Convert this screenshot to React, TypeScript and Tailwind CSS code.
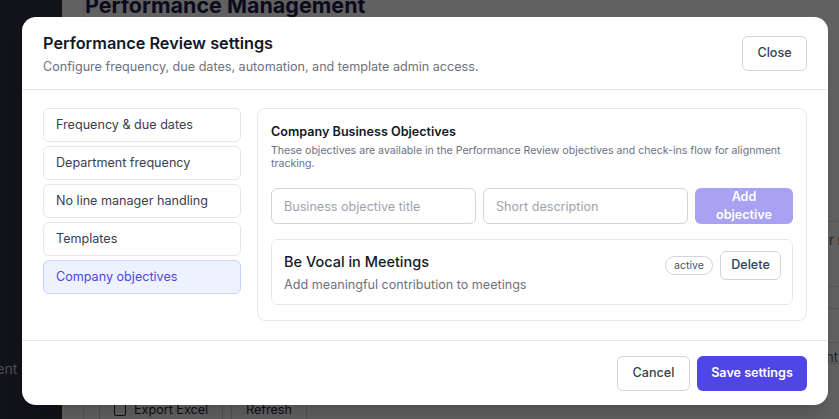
import React, { useState } from 'react';

const sections = [
  'Frequency & due dates',
  'Department frequency',
  'No line manager handling',
  'Templates',
  'Company objectives',
];

const App: React.FC = () => {
  const [active, setActive] = useState('Company objectives');
  const [title, setTitle] = useState('');
  const [desc, setDesc] = useState('');

  return (
    <div
      className="relative w-[839px] h-[419px] overflow-hidden flex bg-white"
      style={{ fontFamily: 'Inter, "Noto Sans", sans-serif' }}
    >
      {/* page behind the dialog */}
      <aside className="w-[62px] shrink-0 bg-[#2d3240] flex flex-col justify-end pb-[40px]">
        <span className="text-[14px] text-[#c9ccd3] -ml-[16px]">ment</span>
      </aside>
      <main className="flex-1 flex">
        <div className="w-[22px] border-r border-[#dfe1e6]" />
        <div className="flex-1 flex flex-col">
          <h1 className="-mt-[11px] ml-[1px] text-[21.5px] font-bold text-[#1e1b4b]">Performance Management</h1>
          <div className="flex-1" />
          <div className="flex gap-2 ml-[15px] -mb-[8px]">
            <button className="h-[34px] px-[14px] rounded-md border border-[#cfd3da] text-[12.6px] text-[#1f2937] flex items-center gap-2">
              <span className="w-[12px] h-[12px] border border-[#1f2937] rounded-[2px]" />
              Export Excel
            </button>
            <button className="h-[34px] px-[14px] rounded-md border border-[#cfd3da] text-[12.6px] text-[#1f2937]">Refresh</button>
          </div>
        </div>
      </main>

      {/* backdrop */}
      <div className="absolute inset-0 bg-black/[0.62]" />
      <div className="absolute left-[828px] top-[221px] w-[20px] border-t border-[#555]" />
      <span className="absolute left-[829px] top-[231px] whitespace-nowrap text-[13px] text-[#222]">r ra</span>
      <div className="absolute left-[828px] top-[286px] w-[20px] border-t border-[#555]" />
      <div className="absolute left-[828px] top-[308px] w-[20px] border-t border-[#555]" />
      <div className="absolute left-[828px] top-[342px] w-[20px] border-t border-[#555]" />
      <span className="absolute left-[826px] top-[348px] text-[13px] text-[#222]">nt</span>
      <div className="absolute left-[828px] top-[363px] w-[20px] border-t border-[#555]" />

      {/* dialog */}
      <div className="absolute left-[22px] top-[17px] w-[806px] h-[388px] bg-white rounded-[14px] flex flex-col shadow-xl">
        <header className="flex items-center justify-between px-[21px] py-[12px] border-b border-[#e5e7eb]">
          <div>
            <h2 className="text-[16.3px] leading-7 font-semibold text-[#111827]">Performance Review settings</h2>
            <p className="text-[12.6px] leading-5 text-[#6b7280]">
              Configure frequency, due dates, automation, and template admin access.
            </p>
          </div>
          <button className="h-[35px] w-[65px] rounded-md border border-[#d1d5db] text-[12.6px] font-medium text-[#374151]">
            Close
          </button>
        </header>

        <div className="flex-1 flex gap-[16px] px-[21px] pt-[18px] pb-[19px]">
          <nav className="w-[198px] shrink-0 flex flex-col gap-[4px]">
            {sections.map((s) => (
              <button
                key={s}
                onClick={() => setActive(s)}
                className={`h-[34px] px-[12px] text-left rounded-md border text-[12.6px] ${
                  active === s
                    ? 'bg-[#eef2ff] border-[#c7d2fe] text-[#4f46e5]'
                    : 'bg-white border-[#e5e7eb] text-[#374151]'
                }`}
              >
                {s}
              </button>
            ))}
          </nav>

          <section className="flex-1 min-w-0 self-start rounded-lg border border-[#e5e7eb] px-[13px] pt-[14px] pb-[15px]">
            <h3 className="text-[12.6px] leading-[18px] font-semibold text-[#111827]">Company Business Objectives</h3>
            <p className="mt-[3px] text-[10.6px] leading-[13px] text-[#6b7280]">
              These objectives are available in the Performance Review objectives and check-ins flow for alignment
              tracking.
            </p>

            <div className="mt-[18px] grid grid-cols-[1fr_1fr_98px] gap-[7px]">
              <input
                value={title}
                onChange={(e) => setTitle(e.target.value)}
                placeholder="Business objective title"
                className="w-full min-w-0 h-[36px] px-[12px] rounded-md border border-[#d1d5db] text-[12.6px] text-[#111827] placeholder:text-[#9ca3af] outline-none"
              />
              <input
                value={desc}
                onChange={(e) => setDesc(e.target.value)}
                placeholder="Short description"
                className="w-full min-w-0 h-[36px] px-[12px] rounded-md border border-[#d1d5db] text-[12.6px] text-[#111827] placeholder:text-[#9ca3af] outline-none"
              />
              <button
                disabled={!title}
                className="h-[36px] rounded-md bg-[#a7a2f2] text-white text-[12.6px] leading-[18px] font-semibold px-[10px]"
              >
                Add objective
              </button>
            </div>

            <div className="mt-[15px] flex justify-between rounded-md border border-[#e5e7eb] pl-[12px] pr-[11px] pt-[11px] pb-[9px]">
              <div className="pt-[1px]">
                <div className="text-[14.5px] leading-5 font-medium text-[#111827]">Be Vocal in Meetings</div>
                <div className="mt-[3px] text-[12.6px] leading-5 text-[#6b7280]">Add meaningful contribution to meetings</div>
              </div>
              <div className="flex items-center gap-[7px] self-start">
                <span className="h-[19px] px-[8px] rounded-full border border-[#d1d5db] text-[10.6px] leading-[17px] text-[#4b5563]">
                  active
                </span>
                <button className="h-[29px] w-[61px] rounded-md border border-[#d1d5db] text-[12.6px] font-medium text-[#374151]">
                  Delete
                </button>
              </div>
            </div>
          </section>
        </div>

        <footer className="flex justify-end gap-[7px] px-[21px] pt-[15px] pb-[16px] border-t border-[#e5e7eb]">
          <button className="h-[35px] w-[73px] rounded-md border border-[#d1d5db] text-[12.6px] font-medium text-[#374151]">
            Cancel
          </button>
          <button className="h-[35px] w-[110px] rounded-md bg-[#4f46e5] text-[12.6px] font-semibold text-white">
            Save settings
          </button>
        </footer>
      </div>
    </div>
  );
};

export default App;
